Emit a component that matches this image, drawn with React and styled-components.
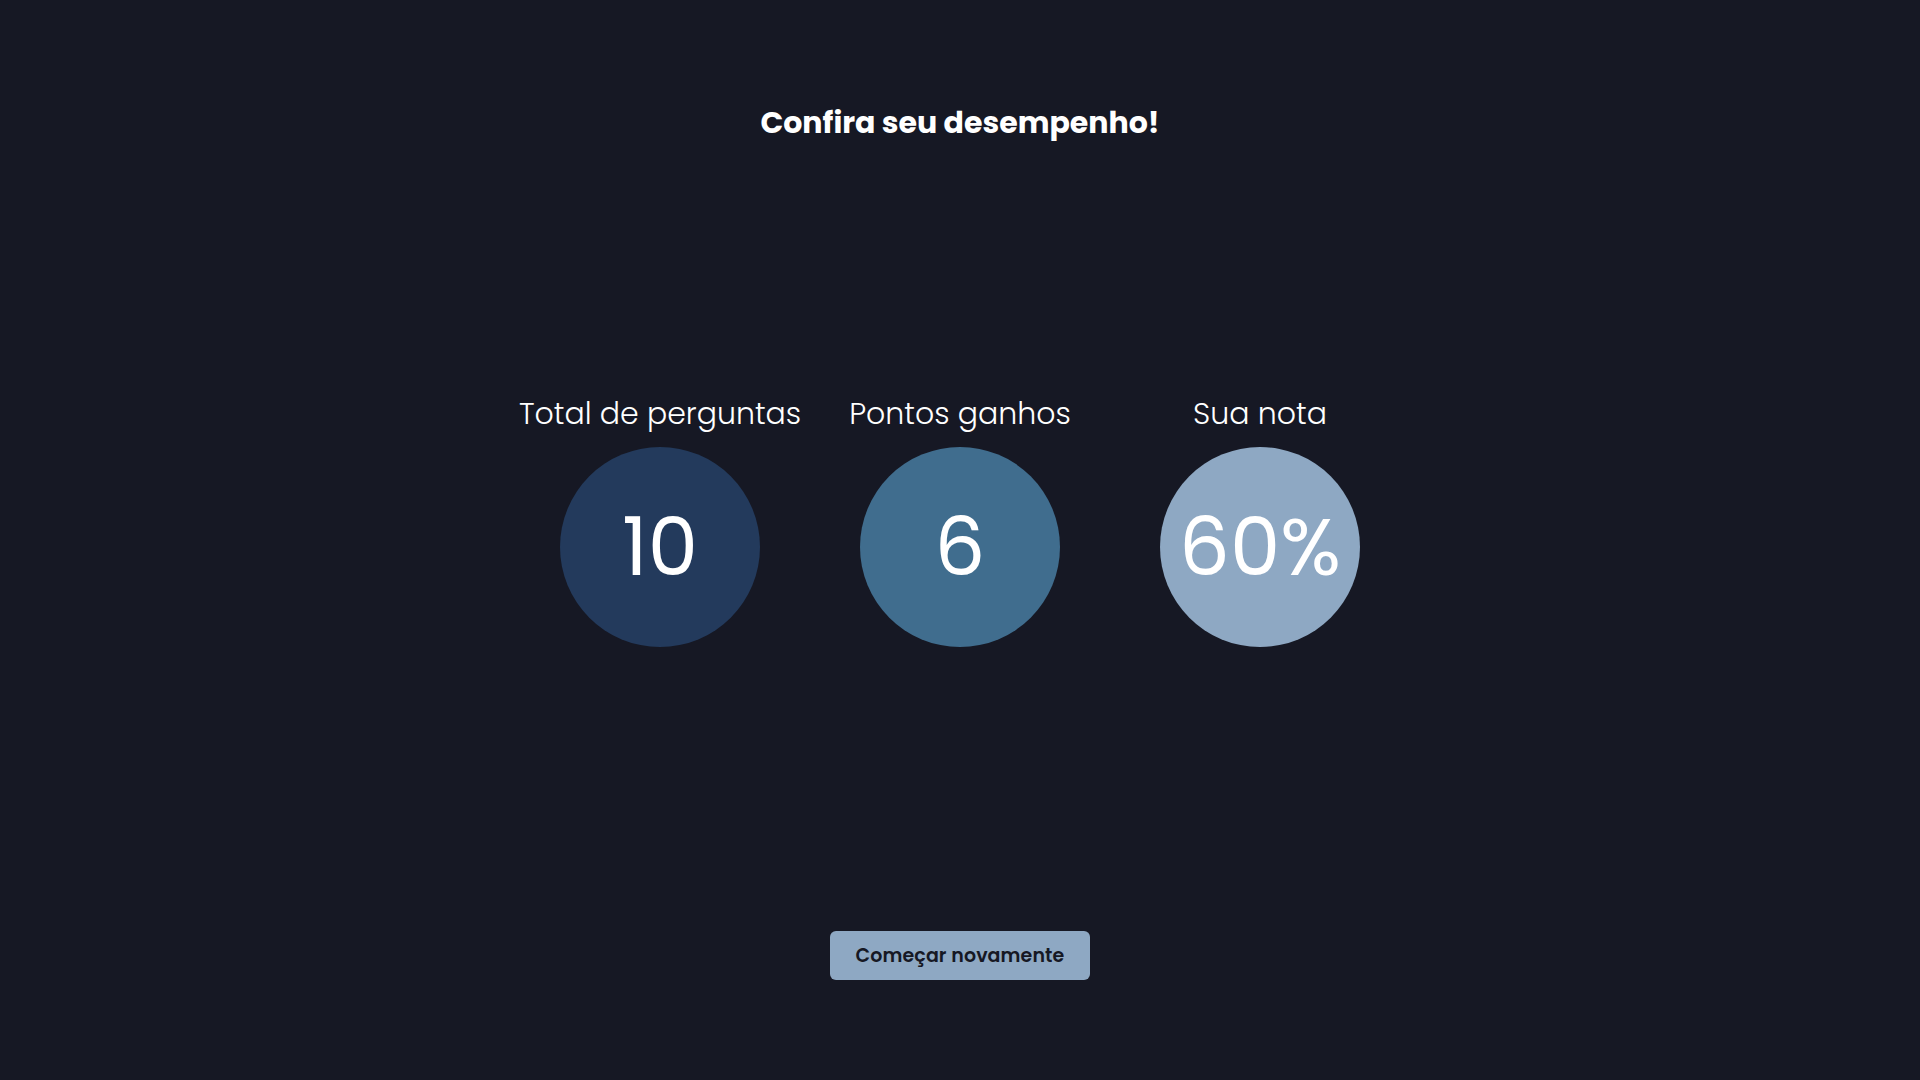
import React from "react";
import styled, { createGlobalStyle } from "styled-components";

const colors = {
  bg: "#161824",
  text: "#ffffff",
  dark: "#233a5c",
  mid: "#406d8e",
  light: "#8ea8c3",
};

const GlobalStyle = createGlobalStyle`
  * { box-sizing: border-box; }
  html, body { margin: 0; padding: 0; background: ${colors.bg}; }
  body { font-family: "Poppins", "Open Sans", sans-serif; color: ${colors.text}; }
`;

const Page = styled.main`
  height: 100vh;
  display: flex;
  flex-direction: column;
  align-items: center;
  padding-top: 100px;
`;

const Title = styled.h1`
  margin: 0;
  font-size: 30px;
  line-height: 45px;
  font-weight: 700;
`;

const Stats = styled.section`
  margin-top: 246px;
  display: grid;
  grid-template-columns: repeat(3, 280px);
  column-gap: 20px;
`;

const Stat = styled.div`
  display: flex;
  flex-direction: column;
  align-items: center;
  gap: 11px;
`;

const Label = styled.span`
  font-size: 30px;
  line-height: 45px;
  font-weight: 300;
  white-space: nowrap;
`;

const Circle = styled.div`
  width: 200px;
  height: 200px;
  border-radius: 50%;
  background: ${(p) => p.color};
  display: flex;
  align-items: center;
  justify-content: center;
  font-size: 80px;
  font-weight: 400;
  line-height: 1;
`;

const Button = styled.button`
  margin-top: 284px;
  width: 260px;
  height: 49px;
  border: none;
  border-radius: 6px;
  background: ${colors.light};
  color: ${colors.bg};
  font-family: inherit;
  font-size: 19px;
  letter-spacing: 0.1px;
  font-weight: 600;
  cursor: pointer;
`;

const stats = [
  { label: "Total de perguntas", value: "10", color: colors.dark },
  { label: "Pontos ganhos", value: "6", color: colors.mid },
  { label: "Sua nota", value: "60%", color: colors.light },
];

export default function App() {
  return (
    <>
      <GlobalStyle />
      <Page>
        <Title>Confira seu desempenho!</Title>
        <Stats>
          {stats.map((s) => (
            <Stat key={s.label}>
              <Label>{s.label}</Label>
              <Circle color={s.color}>{s.value}</Circle>
            </Stat>
          ))}
        </Stats>
        <Button>Começar novamente</Button>
      </Page>
    </>
  );
}
